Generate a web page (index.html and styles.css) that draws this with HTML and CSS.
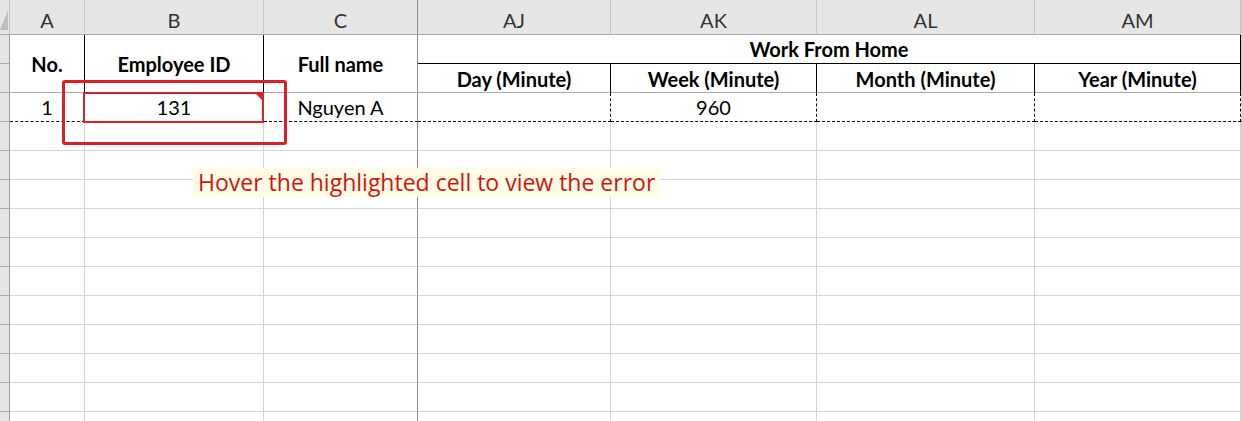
FILE: index.html
```html
<!DOCTYPE html>
<html>
<head>
<meta charset="utf-8">
<link rel="stylesheet" href="styles.css">
</head>
<body>
<div class="page">
  <div class="sheet">
    <div class="corner"><svg width="9" height="22" viewBox="0 0 9 22"><path d="M8 1 L8 21 L0 21 Z" fill="#bdbdbd"/></svg></div>
    <div class="colhdr">A</div>
    <div class="colhdr">B</div>
    <div class="colhdr hid">C</div>
    <div class="colhdr">AJ</div>
    <div class="colhdr">AK</div>
    <div class="colhdr">AL</div>
    <div class="colhdr">AM</div>
    <div class="colhdr"></div>

    <div class="rh"></div>
    <div class="hd tall bk-r">No.</div>
    <div class="hd tall bk-r">Employee ID</div>
    <div class="hd tall hid">Full name</div>
    <div class="hd wide bk-r bk-b">Work From Home</div>
    <div></div>

    <div class="rh"></div>
    <div class="hd sub bk-r">Day (Minute)</div>
    <div class="hd sub bk-r">Week (Minute)</div>
    <div class="hd sub bk-r">Month (Minute)</div>
    <div class="hd sub bk-r">Year (Minute)</div>
    <div class="hbot"></div>

    <div class="rh"></div>
    <div class="dash-b">1</div>
    <div class="dash-b err">131</div>
    <div class="dash-b hid">Nguyen A</div>
    <div class="dash-b dash-r"></div>
    <div class="dash-b dash-r">960</div>
    <div class="dash-b dash-r"></div>
    <div class="dash-b dash-r"></div>
    <div class="dash-b"></div>

    <div class="rh"></div><div></div><div></div><div class="hid"></div><div></div><div></div><div></div><div></div><div></div>
    <div class="rh"></div><div></div><div></div><div class="hid"></div><div></div><div></div><div></div><div></div><div></div>
    <div class="rh"></div><div></div><div></div><div class="hid"></div><div></div><div></div><div></div><div></div><div></div>
    <div class="rh"></div><div></div><div></div><div class="hid"></div><div></div><div></div><div></div><div></div><div></div>
    <div class="rh"></div><div></div><div></div><div class="hid"></div><div></div><div></div><div></div><div></div><div></div>
    <div class="rh"></div><div></div><div></div><div class="hid"></div><div></div><div></div><div></div><div></div><div></div>
    <div class="rh"></div><div></div><div></div><div class="hid"></div><div></div><div></div><div></div><div></div><div></div>
    <div class="rh"></div><div></div><div></div><div class="hid"></div><div></div><div></div><div></div><div></div><div></div>
    <div class="rh"></div><div></div><div></div><div class="hid"></div><div></div><div></div><div></div><div></div><div></div>
    <div class="rh"></div><div></div><div></div><div class="hid"></div><div></div><div></div><div></div><div></div><div></div>
    <div class="rh"></div><div></div><div></div><div class="hid"></div><div></div><div></div><div></div><div></div><div></div>
  </div>
  <div class="callout"></div>
  <div class="note">Hover the highlighted cell to view the error</div>
</div>
</body>
</html>
```
FILE: styles.css
```css
html, body {
  margin: 0;
  padding: 0;
  background: #fff;
  overflow: hidden;
}

.page {
  position: relative;
  width: 1242px;
  height: 421px;
  overflow: hidden;
}

.sheet {
  display: grid;
  grid-template-columns: 10px 75px 179px 154px 193px 206px 218px 206px 1fr;
  grid-template-rows: 35px;
  grid-auto-rows: 29px;
  width: 1242px;
  font-family: Lato, "Liberation Sans", sans-serif;
  font-size: 20px;
  color: #000;
}

.sheet > div {
  box-sizing: border-box;
  border-right: 1px solid #d4d4d4;
  border-bottom: 1px solid #d4d4d4;
  display: flex;
  align-items: center;
  justify-content: center;
  white-space: nowrap;
}

.corner {
  background: #e6e6e6;
  border-right-color: #c0c0c0 !important;
  border-bottom-color: #a8a8a8 !important;
  align-items: flex-end !important;
  justify-content: flex-start !important;
  padding-bottom: 3px;
}

.corner svg {
  display: block;
}

.sheet > .colhdr {
  background: #e6e6e6;
  border-right-color: #c8c8c8;
  border-bottom-color: #a8a8a8;
  color: #333;
  font-size: 20px;
  padding-top: 5px;
}

.sheet > .rh {
  background: #e6e6e6;
  border-right-color: #9a9a9a;
  border-bottom-color: #ababab;
}

.sheet > .hid {
  border-right-color: #8c8c8c;
}

.hd {
  font-weight: 700;
}

.sheet > .tall {
  grid-row: span 2;
  border-bottom-color: #ababab;
  padding-top: 1px;
}

.sheet > .wide {
  grid-column: span 4;
  padding-bottom: 1px;
}

.sheet > .sub {
  border-bottom-color: #ababab;
  padding-top: 1px;
}

.sheet > .hbot {
  border-bottom-color: #ababab;
}

.sheet > .bk-r {
  border-right-color: #000;
}

.sheet > .bk-b {
  border-bottom-color: #000;
}

.sheet > .dash-b {
  border-bottom: 1px dashed #000;
  padding-bottom: 1px;
}

.sheet > .dash-r {
  border-right: 1px dashed #000;
}

.sheet > .err {
  position: relative;
}

.err::before {
  content: "";
  position: absolute;
  left: -2px;
  right: -1px;
  top: -1px;
  bottom: -2px;
  border: 2px solid #d8232b;
}

.err::after {
  content: "";
  position: absolute;
  top: 1px;
  right: 1px;
  width: 0;
  height: 0;
  border-top: 6px solid #e3212a;
  border-left: 6px solid transparent;
}

.callout {
  position: absolute;
  left: 62px;
  top: 80px;
  width: 225px;
  height: 65px;
  box-sizing: border-box;
  border: 3px solid #dc1f27;
  border-radius: 3px;
}

.note {
  position: absolute;
  left: 193px;
  top: 168px;
  width: 467px;
  height: 29px;
  box-sizing: border-box;
  padding-left: 5px;
  background: #fffde6;
  color: #d2150f;
  font-family: "Open Sans", "Liberation Sans", sans-serif;
  font-size: 23px;
  line-height: 29px;
  white-space: nowrap;
}
```
